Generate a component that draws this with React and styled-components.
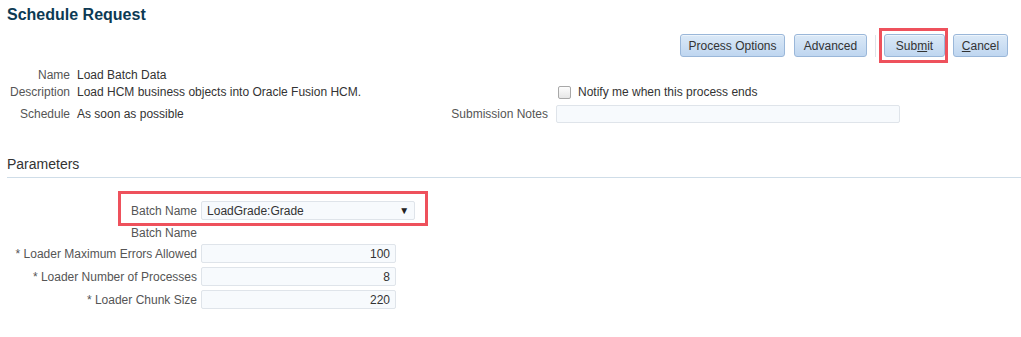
import React from "react";
import styled, { createGlobalStyle } from "styled-components";

const Global = createGlobalStyle`
  html, body { margin: 0; padding: 0; background: #fff; }
  body { font-family: "Liberation Sans", Arial, sans-serif; font-size: 12px; color: #333; }
`;

const Page = styled.div`
  width: 1021px;
  height: 337px;
  box-sizing: border-box;
  padding: 4px 0 0 7px;
  overflow: hidden;
`;

const Title = styled.h1`
  margin: 0;
  font-size: 16px;
  font-weight: bold;
  color: #0c3a54;
  height: 22px;
  line-height: 22px;
`;

const Toolbar = styled.div`
  display: flex;
  justify-content: flex-end;
  align-items: center;
  padding-right: 13px;
  margin-top: 2px;
  height: 35px;
`;

const Button = styled.button`
  font-family: inherit;
  font-size: 12px;
  color: #333;
  height: 23px;
  width: ${(p) => p.$w}px;
  margin-left: ${(p) => p.$ml || 0}px;
  padding: 0;
  border: 1px solid #9ab7d9;
  border-radius: 3px;
  background: linear-gradient(#dbe9f7, #bfd6f0);
  box-shadow: inset 0 1px 0 #edf4fb;
  cursor: pointer;
`;

const Separator = styled.div`
  width: 1px;
  height: 22px;
  background: #dfe3e8;
  margin: 0 3px 0 8px;
`;

const Highlight = styled.div`
  display: flex;
  align-items: center;
  border: 3px solid #ee515c;
  padding: ${(p) => p.$pad};
  margin: ${(p) => p.$margin || 0};
`;

const Info = styled.div`
  display: flex;
  margin-top: 3px;
`;

const InfoGrid = styled.div`
  display: grid;
  grid-template-columns: 63px auto;
  column-gap: 7px;
  grid-auto-rows: 17px;
  align-items: center;
  width: 400px;
  & > :nth-child(n + 5) { margin-top: 10px; }
`;

const Label = styled.span`
  text-align: right;
  color: #555;
  white-space: nowrap;
`;

const Value = styled.span`
  color: #333;
  white-space: nowrap;
`;

const SideGrid = styled.div`
  display: grid;
  grid-template-columns: 141px 344px;
  column-gap: 8px;
  align-items: center;
  margin-top: 19px;
  row-gap: 6px;
`;

const CheckRow = styled.label`
  display: flex;
  align-items: center;
  gap: 7px;
  margin-left: 2px;
  color: #333;
`;

const Box = styled.span`
  width: 11px;
  height: 11px;
  border: 1px solid #a8a8a8;
  border-radius: 2px;
  background: linear-gradient(#fdfdfd, #e6e6e6);
`;

const TextInput = styled.div`
  box-sizing: border-box;
  height: ${(p) => p.$h || 18}px;
  width: ${(p) => p.$w}px;
  margin-left: ${(p) => p.$ml || 0}px;
  border: 1px solid #dfe4ea;
  border-radius: 2px;
  background: #f7fafd;
  display: flex;
  align-items: center;
  justify-content: ${(p) => (p.$right ? "flex-end" : "space-between")};
  padding: 0 5px;
  color: #333;
`;

const Section = styled.h2`
  margin: 31px 0 0 0;
  font-size: 14px;
  font-weight: normal;
  color: #333;
  height: 20px;
  line-height: 20px;
  padding-bottom: 3px;
  border-bottom: 1px solid #cfdde8;
`;

const Params = styled.div`
  display: grid;
  grid-template-columns: 190px auto;
  column-gap: 4px;
  row-gap: 4px;
  margin-top: 13px;
  align-items: center;
  justify-items: start;
`;

const ParamLabel = styled.span`
  justify-self: end;
  color: #555;
  white-space: nowrap;
`;

const HelperLabel = styled(ParamLabel)`
  margin-top: -4px;
  line-height: 14px;
`;

const Caret = styled.span`
  font-size: 10px;
  color: #222;
`;

const FullRow = styled.div`
  grid-column: 1 / 3;
`;

export default function App() {
  return (
    <Page>
      <Global />
      <Title>Schedule Request</Title>
      <Toolbar>
        <Button $w={105}>Process Options</Button>
        <Button $w={73} $ml={9}>Advanced</Button>
        <Separator />
        <Highlight $pad="3px 0 3px 2px">
          <Button $w={61}>
            Sub<u>m</u>it
          </Button>
        </Highlight>
        <Button $w={55} $ml={5}>
          <u>C</u>ancel
        </Button>
      </Toolbar>
      <Info>
        <InfoGrid>
          <Label>Name</Label>
          <Value>Load Batch Data</Value>
          <Label>Description</Label>
          <Value>Load HCM business objects into Oracle Fusion HCM.</Value>
          <Label>Schedule</Label>
          <Value>As soon as possible</Value>
        </InfoGrid>
        <SideGrid>
          <span />
          <CheckRow>
            <Box />
            Notify me when this process ends
          </CheckRow>
          <Label>Submission Notes</Label>
          <TextInput $w={344} $h={18} />
        </SideGrid>
      </Info>
      <Section>Parameters</Section>
      <Params>
        <FullRow>
          <Highlight $pad="7px 10px 3px 10px" $margin="0 0 0 111px">
            <ParamLabel>Batch Name</ParamLabel>
            <TextInput $w={214} $h={19} $ml={4}>
              LoadGrade:Grade
              <Caret>▼</Caret>
            </TextInput>
          </Highlight>
        </FullRow>
        <HelperLabel>Batch Name</HelperLabel>
        <span />
        <ParamLabel>* Loader Maximum Errors Allowed</ParamLabel>
        <TextInput $w={195} $h={19} $right>100</TextInput>
        <ParamLabel>* Loader Number of Processes</ParamLabel>
        <TextInput $w={195} $h={19} $right>8</TextInput>
        <ParamLabel>* Loader Chunk Size</ParamLabel>
        <TextInput $w={195} $h={19} $right>220</TextInput>
      </Params>
    </Page>
  );
}
